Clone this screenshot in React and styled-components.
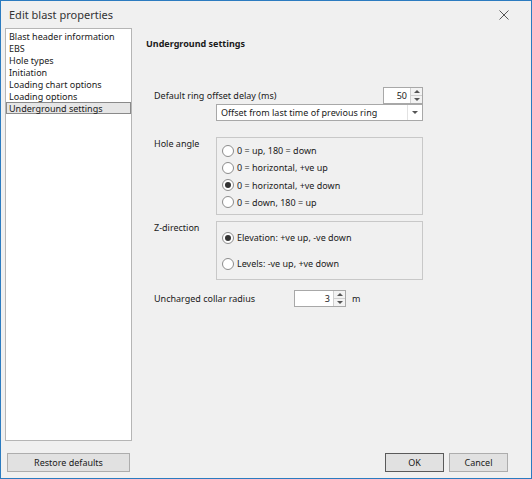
import React, { useState } from 'react';
import styled, { createGlobalStyle } from 'styled-components';

const GlobalStyle = createGlobalStyle`
  html, body {
    margin: 0;
    padding: 0;
    background: #f0f0f0;
  }
  * {
    box-sizing: border-box;
  }
`;

const Window = styled.div`
  width: 532px;
  height: 479px;
  display: flex;
  flex-direction: column;
  background: #f0f0f0;
  border: 1px solid #2b7bc0;
  font-family: "Noto Sans", "Open Sans", sans-serif;
  font-size: 9px;
  color: #1a1a1a;
`;

const TitleBar = styled.div`
  height: 27px;
  flex: none;
  display: flex;
  align-items: center;
  justify-content: space-between;
  padding: 0 22px 0 8px;
`;

const Title = styled.span`
  font-size: 11px;
  color: #333;
`;

const CloseIcon = styled.svg`
  width: 10px;
  height: 10px;
  display: block;
`;

const Body = styled.div`
  flex: 1;
  display: flex;
  padding: 0 0 0 4px;
  min-height: 0;
`;

const NavList = styled.ul`
  list-style: none;
  margin: 0;
  padding: 1px 0 0;
  width: 127px;
  height: 413px;
  background: #fff;
  border: 1px solid #b5b5b5;
`;

const NavItem = styled.li`
  height: 12px;
  line-height: 11px;
  padding: 0 2px;
  margin: 0;
  white-space: nowrap;
  border: 1px solid ${p => (p.$active ? '#8a8a8a' : 'transparent')};
  background: ${p => (p.$active ? '#e6e6e6' : 'transparent')};
  cursor: default;
`;

const Content = styled.div`
  flex: 1;
  padding: 9px 0 0 14px;
`;

const Heading = styled.h3`
  margin: 0 0 37px;
  font-size: 9px;
  font-weight: bold;
  line-height: 13px;
`;

const Form = styled.div`
  width: 269px;
  margin-left: 8px;
  display: flex;
  flex-direction: column;
`;

const Row = styled.div`
  display: flex;
  align-items: center;
  justify-content: space-between;
  height: 17px;
`;

const Label = styled.span`
  white-space: nowrap;
`;

const Indented = styled.div`
  display: flex;
  justify-content: flex-end;
`;

const SpinBox = styled.div`
  display: flex;
  width: ${p => p.$width}px;
  height: 17px;
  background: #fff;
  border: 1px solid #a8a8a8;
`;

const SpinValue = styled.span`
  flex: 1;
  text-align: right;
  padding-right: 3px;
  line-height: 15px;
`;

const SpinButtons = styled.div`
  width: 12px;
  display: flex;
  flex-direction: column;
  border-left: 1px solid #d0d0d0;
  background: #f3f3f3;
`;

const SpinButton = styled.div`
  flex: 1;
  display: flex;
  align-items: center;
  justify-content: center;
  border-top: ${p => (p.$down ? '1px solid #d0d0d0' : 'none')};
`;

const Arrow = styled.span`
  width: 0;
  height: 0;
  border-left: 3px solid transparent;
  border-right: 3px solid transparent;
  ${p => (p.$up ? 'border-bottom: 3px solid #555;' : 'border-top: 3px solid #555;')}
`;

const Select = styled.div`
  width: 207px;
  height: 17px;
  display: flex;
  background: #fff;
  border: 1px solid #a8a8a8;
`;

const SelectText = styled.span`
  flex: 1;
  padding-left: 4px;
  line-height: 15px;
`;

const SelectButton = styled.div`
  width: 15px;
  display: flex;
  align-items: center;
  justify-content: center;
  border-left: 1px solid #e2e2e2;
`;

const GroupRow = styled.div`
  display: grid;
  grid-template-columns: 62px 207px;
  margin-top: ${p => p.$gap}px;
`;

const GroupLabel = styled.span`
  padding-top: 1px;
  line-height: 11px;
`;

const GroupBox = styled.div`
  height: ${p => p.$height}px;
  border: 1px solid #c8c8c8;
  display: flex;
  flex-direction: column;
  justify-content: space-between;
  padding: ${p => p.$pad};
`;

const RadioRow = styled.label`
  display: flex;
  align-items: center;
  gap: 3px;
  height: 13px;
  padding-left: 5px;
  white-space: nowrap;
`;

const RadioCircle = styled.span`
  width: 12px;
  height: 12px;
  border-radius: 50%;
  border: 1px solid #8c8c8c;
  background: #fff;
  display: flex;
  align-items: center;
  justify-content: center;

  &::after {
    content: '';
    width: 6px;
    height: 6px;
    border-radius: 50%;
    background: ${p => (p.$checked ? '#333' : 'transparent')};
  }
`;

const CollarRow = styled.div`
  display: flex;
  align-items: center;
  height: 17px;
  margin-top: 10px;
`;

const CollarLabel = styled.span`
  width: 140px;
`;

const Unit = styled.span`
  margin-left: 6px;
`;

const Footer = styled.div`
  flex: none;
  height: 37px;
  display: flex;
  align-items: flex-start;
  padding: 12px 23px 0 6px;
  gap: 5px;
`;

const Button = styled.button`
  height: 19px;
  width: ${p => p.$width}px;
  margin-left: ${p => p.$push ? 'auto' : '0'};
  padding: 0;
  font-family: inherit;
  font-size: 9px;
  color: #1a1a1a;
  background: #e1e1e1;
  border: 1px solid ${p => (p.$default ? '#5a5a5a' : '#adadad')};
`;

const navItems = [
  'Blast header information',
  'EBS',
  'Hole types',
  'Initiation',
  'Loading chart options',
  'Loading options',
  'Underground settings',
];

function Spinner({ value, width }) {
  return (
    <SpinBox $width={width}>
      <SpinValue>{value}</SpinValue>
      <SpinButtons>
        <SpinButton><Arrow $up /></SpinButton>
        <SpinButton $down><Arrow /></SpinButton>
      </SpinButtons>
    </SpinBox>
  );
}

function Radio({ checked, children, onSelect }) {
  return (
    <RadioRow onClick={onSelect}>
      <RadioCircle $checked={checked} />
      <span>{children}</span>
    </RadioRow>
  );
}

export default function App() {
  const [active, setActive] = useState('Underground settings');
  const [holeAngle, setHoleAngle] = useState(2);
  const [zDir, setZDir] = useState(0);

  const holeOptions = [
    '0 = up, 180 = down',
    '0 = horizontal, +ve up',
    '0 = horizontal, +ve down',
    '0 = down, 180 = up',
  ];
  const zOptions = ['Elevation: +ve up, -ve down', 'Levels: -ve up, +ve down'];

  return (
    <>
      <GlobalStyle />
      <Window>
        <TitleBar>
          <Title>Edit blast properties</Title>
          <CloseIcon viewBox="0 0 10 10">
            <path d="M0.5 0.5 L9.5 9.5 M9.5 0.5 L0.5 9.5" stroke="#555" strokeWidth="1" fill="none" />
          </CloseIcon>
        </TitleBar>

        <Body>
          <NavList>
            {navItems.map(item => (
              <NavItem key={item} $active={item === active} onClick={() => setActive(item)}>
                {item}
              </NavItem>
            ))}
          </NavList>

          <Content>
            <Heading>Underground settings</Heading>
            <Form>
              <Row>
                <Label>Default ring offset delay (ms)</Label>
                <Spinner value="50" width={40} />
              </Row>
              <Indented>
                <Select>
                  <SelectText>Offset from last time of previous ring</SelectText>
                  <SelectButton><Arrow /></SelectButton>
                </Select>
              </Indented>

              <GroupRow $gap={16}>
                <GroupLabel>Hole angle</GroupLabel>
                <GroupBox $height={78} $pad="6px 0 5px">
                  {holeOptions.map((opt, i) => (
                    <Radio key={opt} checked={holeAngle === i} onSelect={() => setHoleAngle(i)}>
                      {opt}
                    </Radio>
                  ))}
                </GroupBox>
              </GroupRow>

              <GroupRow $gap={6}>
                <GroupLabel>Z-direction</GroupLabel>
                <GroupBox $height={59} $pad="9px 0 9px">
                  {zOptions.map((opt, i) => (
                    <Radio key={opt} checked={zDir === i} onSelect={() => setZDir(i)}>
                      {opt}
                    </Radio>
                  ))}
                </GroupBox>
              </GroupRow>

              <CollarRow>
                <CollarLabel>Uncharged collar radius</CollarLabel>
                <Spinner value="3" width={52} />
                <Unit>m</Unit>
              </CollarRow>
            </Form>
          </Content>
        </Body>

        <Footer>
          <Button $width={123}>Restore defaults</Button>
          <Button $width={59} $push $default>OK</Button>
          <Button $width={59}>Cancel</Button>
        </Footer>
      </Window>
    </>
  );
}
